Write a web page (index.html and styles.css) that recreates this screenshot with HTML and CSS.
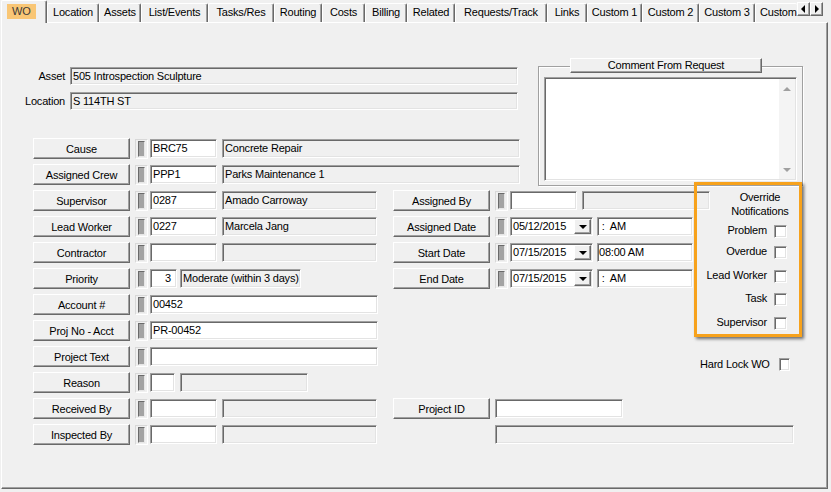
FILE: index.html
```html
<!DOCTYPE html>
<html>
<head>
<meta charset="utf-8">
<title>WO</title>
<link rel="stylesheet" href="styles.css">
</head>
<body>
<div class="tabbar">
  <div class="tabs">
    <div class="tab sel"><span class="hl">WO</span></div>
    <div class="tab">Location</div>
    <div class="tab">Assets</div>
    <div class="tab">List/Events</div>
    <div class="tab">Tasks/Res</div>
    <div class="tab">Routing</div>
    <div class="tab">Costs</div>
    <div class="tab">Billing</div>
    <div class="tab">Related</div>
    <div class="tab">Requests/Track</div>
    <div class="tab">Links</div>
    <div class="tab">Custom 1</div>
    <div class="tab">Custom 2</div>
    <div class="tab">Custom 3</div>
    <div class="tab clip">Custom 4</div>
  </div>
  <div class="spin">
    <div class="sbtn"><span class="tri-l"></span></div>
    <div class="sbtn"><span class="tri-r"></span></div>
  </div>
</div>

<div class="panel">
  <div class="top">
    <div class="topleft">
      <div class="lrow"><span class="lbl">Asset</span><div class="fld ro wide">505 Introspection Sculpture</div></div>
      <div class="lrow"><span class="lbl">Location</span><div class="fld ro wide">S 114TH ST</div></div>
      <div class="frows">
        <div class="frow"><div class="btn">Cause</div><div class="lock"><i></i></div><div class="fld code">BRC75</div><div class="fld ro gap dl">Concrete Repair</div></div>
        <div class="frow"><div class="btn">Assigned Crew</div><div class="lock"><i></i></div><div class="fld code">PPP1</div><div class="fld ro gap dl">Parks Maintenance 1</div></div>
      </div>
    </div>
    <div class="cgroup">
      <div class="ctitle">Comment From Request</div>
      <div class="memo">
        <div class="vscroll"><span class="up"></span><span class="dn"></span></div>
      </div>
    </div>
  </div>

  <div class="bottom">
    <div class="colL">
      <div class="frow"><div class="btn">Supervisor</div><div class="lock"><i></i></div><div class="fld code">0287</div><div class="fld ro gap ds">Amado Carroway</div></div>
      <div class="frow"><div class="btn">Lead Worker</div><div class="lock"><i></i></div><div class="fld code">0227</div><div class="fld ro gap ds">Marcela Jang</div></div>
      <div class="frow"><div class="btn">Contractor</div><div class="lock"><i></i></div><div class="fld code"></div><div class="fld ro gap ds"></div></div>
      <div class="frow"><div class="btn">Priority</div><div class="lock"><i></i></div><div class="fld num">3</div><div class="fld ro pdesc">Moderate (within 3 days)</div></div>
      <div class="frow"><div class="btn">Account #</div><div class="lock"><i></i></div><div class="fld long">00452</div></div>
      <div class="frow"><div class="btn">Proj No - Acct</div><div class="lock"><i></i></div><div class="fld long">PR-00452</div></div>
      <div class="frow"><div class="btn">Project Text</div><div class="lock"><i></i></div><div class="fld long"></div></div>
      <div class="frow"><div class="btn">Reason</div><div class="lock"><i></i></div><div class="fld rcode"></div><div class="fld ro gap rdesc"></div></div>
      <div class="frow"><div class="btn">Received By</div><div class="lock"><i></i></div><div class="fld code"></div><div class="fld ro gap ds"></div></div>
      <div class="frow"><div class="btn">Inspected By</div><div class="lock"><i></i></div><div class="fld code"></div><div class="fld ro gap ds"></div></div>
    </div>

    <div class="colM">
      <div class="frow"><div class="btn">Assigned By</div><div class="lock"><i></i></div><div class="fld code"></div><div class="fld ro gap dm"></div></div>
      <div class="frow"><div class="btn">Assigned Date</div><div class="lock"><i></i></div><div class="fld combo"><span>05/12/2015</span><span class="dd"><b></b></span></div><div class="fld time"> :  AM</div></div>
      <div class="frow"><div class="btn">Start Date</div><div class="lock"><i></i></div><div class="fld combo"><span>07/15/2015</span><span class="dd"><b></b></span></div><div class="fld time">08:00 AM</div></div>
      <div class="frow"><div class="btn">End Date</div><div class="lock"><i></i></div><div class="fld combo"><span>07/15/2015</span><span class="dd"><b></b></span></div><div class="fld time"> :  AM</div></div>
      <div class="frow pid"><div class="btn">Project ID</div><div class="fld gap dm"></div></div>
      <div class="frow pdesc-row"><div class="fld ro pidesc"></div></div>
    </div>

    <div class="colR">
      <div class="otitle">Override<br>Notifications</div>
      <div class="chk c1"><span>Problem</span><span class="box"></span></div>
      <div class="chk c2"><span>Overdue</span><span class="box"></span></div>
      <div class="chk c3"><span>Lead Worker</span><span class="box"></span></div>
      <div class="chk c4"><span>Task</span><span class="box"></span></div>
      <div class="chk c5"><span>Supervisor</span><span class="box"></span></div>
      <div class="chk hard"><span>Hard Lock WO</span><span class="box"></span></div>
    </div>
  </div>

  <div class="callout"></div>
</div>
</body>
</html>
```

FILE: styles.css
```css
* { box-sizing: border-box; }
html, body { margin: 0; padding: 0; }
body {
  background: #f0f0f0;
  font-family: "Liberation Sans", Arial, sans-serif;
  font-size: 11px;
  letter-spacing: -0.2px;
  color: #000;
  width: 831px;
  height: 492px;
  overflow: hidden;
}

/* ---------- tab strip ---------- */
.tabbar { display: flex; height: 22px; padding-left: 1px; }
.tabs {
  display: grid;
  grid-template-columns: 46px 52px 42px 67px 66px 48px 43px 42px 48px 92px 40px 55px 57px 56px 42px;
  align-items: end;
  width: 796px;
  height: 22px;
}
.tab {
  height: 19px;
  line-height: 17px;
  text-align: center;
  white-space: nowrap;
  background: #f0f0f0;
  border-top: 1px solid #fff;
  border-left: 1px solid #fff;
  border-right: 1px solid #696969;
  box-shadow: inset -1px 0 0 #a0a0a0;
  border-radius: 2px 2px 0 0;
}
.tab.sel {
  position: relative;
  z-index: 3;
  height: 23px;
  margin-bottom: -1px;
  text-align: left;
  padding: 3px 0 0 5px;
}
.hl {
  display: block;
  width: 29px;
  height: 15px;
  line-height: 15px;
  padding-left: 5px;
  background: #f9c675;
  color: #3a3a3a;
}
.tab.clip {
  overflow: hidden;
  text-align: left;
  padding-left: 4px;
  border-right: none;
  box-shadow: none;
}
.spin { display: flex; margin-top: 2px; height: 14px; }
.sbtn {
  width: 13px;
  height: 14px;
  display: flex;
  align-items: center;
  justify-content: center;
  background: #f0f0f0;
  border: 1px solid;
  border-color: #fff #696969 #696969 #fff;
  box-shadow: inset -1px -1px 0 #a0a0a0;
}
.tri-l { width: 0; height: 0; border-right: 4px solid #000; border-top: 4px solid transparent; border-bottom: 4px solid transparent; margin-left: -1px; }
.tri-r { width: 0; height: 0; border-left: 4px solid #000; border-top: 4px solid transparent; border-bottom: 4px solid transparent; }

/* ---------- panel ---------- */
.panel {
  position: relative;
  margin-left: 1px;
  width: 827px;
  height: 467px;
  border-top: 1px solid #fff;
  border-left: 1px solid #fff;
  border-right: 1px solid #696969;
  border-bottom: 1px solid #696969;
  box-shadow: inset -1px -1px 0 #a0a0a0;
}

.top { display: flex; height: 167px; }
.topleft { width: 536px; padding-top: 44px; }
.lrow { display: flex; align-items: center; height: 18px; }
.lrow + .lrow { margin-top: 7px; }
.lbl { width: 63px; margin-right: 5px; text-align: right; }
.lrow .fld { margin-top: 0; height: 18px; line-height: 16px; padding-left: 2px; }
.wide { width: 448px; }

.frows {
  display: grid;
  grid-template-rows: 21px 21px;
  row-gap: 5px;
  margin-top: 28px;
  padding-left: 31px;
}
.frow { display: flex; align-items: flex-start; height: 21px; }

.btn {
  flex: none;
  width: 97px;
  height: 21px;
  line-height: 20px;
  text-align: center;
  white-space: nowrap;
  background: #f0f0f0;
  border: 1px solid;
  border-color: #fff #696969 #696969 #fff;
  box-shadow: inset -1px -1px 0 #a0a0a0;
}
.lock {
  flex: none;
  width: 13px;
  height: 20px;
  margin: 1px 2px 0 5px;
  display: flex;
  align-items: center;
  justify-content: center;
  border: 1px solid;
  border-color: #d8d8d8 #fff #fff #d8d8d8;
}
.lock i {
  display: block;
  width: 7px;
  height: 16px;
  background: #a3a3a3;
  border: 1px solid;
  border-color: #6a6a6a #e6e6e6 #e6e6e6 #6a6a6a;
}

.fld {
  flex: none;
  height: 19px;
  margin-top: 1px;
  line-height: 17px;
  padding: 0 1px 0 2px;
  white-space: pre;
  overflow: hidden;
  background: #fff;
  border: 1px solid;
  border-color: #a0a0a0 #fff #fff #a0a0a0;
  box-shadow: inset 1px 1px 0 #696969, inset -1px -1px 0 #e3e3e3;
}
.fld.ro { background: #f0f0f0; }
.gap { margin-left: 5px; }
.code { width: 67px; }
.dl { width: 298px; }
.ds { width: 155px; }
.dm { width: 128px; }
.num { width: 27px; text-align: right; padding-right: 5px; }
.pdesc { width: 121px; margin-left: 3px; padding-left: 2px; }
.long { width: 228px; }
.rcode { width: 25px; }
.rdesc { width: 128px; }

/* ---------- comment group ---------- */
.cgroup {
  position: relative;
  width: 265px;
  height: 120px;
  margin-top: 43px;
  border: 1px solid #a0a0a0;
  box-shadow: inset 1px 1px 0 #fff, 1px 1px 0 #fff;
  padding: 10px 0 0 5px;
}
.ctitle {
  position: absolute;
  left: 31px;
  top: -9px;
  width: 192px;
  height: 15px;
  line-height: 13px;
  text-align: center;
  background: #f0f0f0;
  border: 1px solid;
  border-color: #fff #696969 #696969 #fff;
  box-shadow: inset -1px -1px 0 #a0a0a0;
}
.memo {
  display: flex;
  justify-content: flex-end;
  width: 253px;
  height: 104px;
  background: #fff;
  border: 1px solid;
  border-color: #a0a0a0 #fff #fff #a0a0a0;
  box-shadow: inset 1px 1px 0 #696969, inset -1px -1px 0 #e3e3e3;
  padding: 1px;
}
.vscroll {
  width: 16px;
  display: flex;
  flex-direction: column;
  justify-content: space-between;
  align-items: center;
  padding: 8px 0 7px;
  background: #f4f4f4;
}
.up { width: 0; height: 0; border-bottom: 4px solid #a0a0a0; border-left: 4px solid transparent; border-right: 4px solid transparent; }
.dn { width: 0; height: 0; border-top: 4px solid #a0a0a0; border-left: 4px solid transparent; border-right: 4px solid transparent; }

/* ---------- lower form ---------- */
.bottom { display: flex; }
.colL {
  width: 391px;
  padding-left: 31px;
  display: grid;
  grid-template-rows: repeat(10, 21px);
  row-gap: 5px;
}
.colM {
  width: 307px;
  display: grid;
  grid-template-rows: repeat(10, 21px);
  row-gap: 5px;
}
.pid { grid-row: 9; }
.pdesc-row { grid-row: 10; }
.pidesc { width: 299px; margin-left: 102px; }

.combo {
  width: 83px;
  display: flex;
  align-items: flex-start;
  justify-content: space-between;
  padding: 0 1px 0 2px;
}
.dd {
  width: 17px;
  height: 15px;
  margin-top: 1px;
  display: flex;
  align-items: center;
  justify-content: center;
  background: #f0f0f0;
  border: 1px solid;
  border-color: #fff #696969 #696969 #fff;
  box-shadow: inset -1px -1px 0 #a0a0a0;
}
.dd b { display: block; width: 0; height: 0; border-top: 4px solid #000; border-left: 4px solid transparent; border-right: 4px solid transparent; }
.time { width: 96px; margin-left: 4px; padding-left: 1px; }

/* ---------- override column ---------- */
.colR { width: 92px; }
.otitle {
  padding-left: 28px;
  line-height: 14px;
  text-align: center;
}
.chk {
  display: flex;
  justify-content: flex-end;
  align-items: center;
  gap: 7px;
  height: 13px;
  padding-right: 5px;
  white-space: nowrap;
}
.chk span:first-child { margin-top: -3px; }
.c1 { margin-top: 7px; }
.c2 { margin-top: 8px; }
.c3 { margin-top: 11px; }
.c4 { margin-top: 10px; }
.c5 { margin-top: 11px; }
.chk.hard { margin-top: 28px; padding-right: 2px; gap: 9px; }
.chk.hard span:first-child { margin-top: -1px; }
.box {
  width: 13px;
  height: 13px;
  background: #fff;
  border: 1px solid;
  border-color: #a0a0a0 #fff #fff #a0a0a0;
  box-shadow: inset 1px 1px 0 #696969, inset -1px -1px 0 #e3e3e3;
}

/* annotation highlight drawn over the form */
.callout {
  position: absolute;
  left: 692px;
  top: 159px;
  width: 108px;
  height: 155px;
  border: 3px solid #f7a21c;
  box-shadow: 2px 2px 3px rgba(0, 0, 0, 0.55);
  pointer-events: none;
}
```
